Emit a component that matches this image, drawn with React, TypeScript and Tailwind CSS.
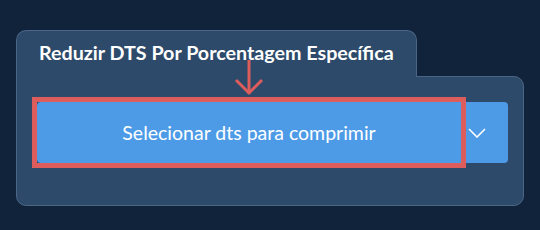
export default function App() {
  return (
    <div className="h-[230px] w-[540px] overflow-hidden bg-[#11233a] pl-4 pt-[30px] font-['Lato',sans-serif]">
      <div className="relative w-[508px]">
        {/* tab */}
        <div className="relative z-10 -mb-px h-[47px] w-[401px] rounded-t-[10px] border border-b-0 border-[#4b6587] bg-[#2d4a6a] pl-[22px] pt-[10px]">
          <span className="text-[19.7px] font-bold leading-[24px] text-white">
            Reduzir DTS Por Porcentagem Específica
          </span>
        </div>

        {/* body */}
        <div className="h-[130px] rounded-b-[10px] rounded-tr-[10px] border border-[#4b6587] bg-[#2d4a6a] pl-5 pt-[25px]">
          <div className="flex h-[61px] w-[471px]">
            <div className="relative flex w-[424px] items-center justify-center rounded-l bg-[#4d9be7]">
              <span className="text-[19.5px] leading-none text-white">Selecionar dts para comprimir</span>
              {/* annotation box */}
              <div className="pointer-events-none absolute -inset-[5px] border-[5px] border-[#dc5d5b]" />
            </div>
            <button className="flex flex-1 items-center justify-center rounded-r bg-[#4d9be7] pr-[15px]">
              <svg width="18" height="10" viewBox="0 0 18 10" fill="none" stroke="white" strokeWidth="1.6">
                <path d="M1 1 L9 9 L17 1" />
              </svg>
            </button>
          </div>
        </div>

        {/* annotation arrow */}
        <svg
          className="pointer-events-none absolute left-[218px] top-[30px] z-20"
          width="30"
          height="36"
          viewBox="0 0 30 36"
          fill="none"
          stroke="#dc5d5b"
          strokeWidth="3"
        >
          <path d="M15 0 V34" />
          <path d="M2 20 L15 33 L28 20" />
        </svg>
      </div>
    </div>
  );
}
